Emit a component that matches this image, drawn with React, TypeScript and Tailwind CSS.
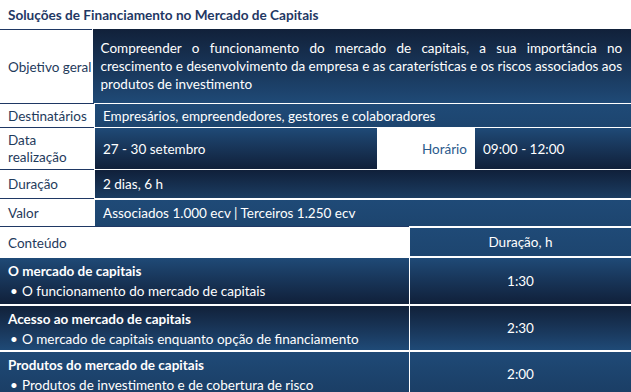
import React from "react";

const font = { fontFamily: "Lato, 'Open Sans', sans-serif" };

const modules = [
  {
    title: "O mercado de capitais",
    item: "O funcionamento do mercado de capitais",
    hours: "1:30",
    bg: "bg-linear-to-b from-[#1f4a77] to-[#10203a]",
    h: "h-[48px]",
  },
  {
    title: "Acesso ao mercado de capitais",
    item: "O mercado de capitais enquanto opção de financiamento",
    hours: "2:30",
    bg: "bg-linear-to-b from-[#11213a] to-[#1f4a77]",
    h: "h-[46px]",
  },
  {
    title: "Produtos do mercado de capitais",
    item: "Produtos de investimento e de cobertura de risco",
    hours: "2:00",
    bg: "bg-linear-to-b from-[#1f4a77] to-[#1a3d64]",
    h: "h-[46px]",
  },
];

export default function App() {
  return (
    <div
      className="w-[631px] h-[392px] overflow-hidden bg-white text-[13.5px] leading-[18px]"
      style={font}
    >
      {/* Title */}
      <div className="h-[29px] flex items-center px-2 text-[13.6px] font-bold text-[#1f3864]">
        Soluções de Financiamento no Mercado de Capitais
      </div>

      {/* Info table */}
      <div className="flex h-[74px]">
        <div className="w-[94px] mr-px border-t border-[#1f3864] flex items-center pl-2 whitespace-nowrap text-[#1f3b5c]">
          Objetivo geral
        </div>
        <div className="flex-1 bg-linear-to-b from-[#11213a] to-[#1f4a77] text-white pl-2 pr-[9px] pt-[10px]">
          <div className="text-justify [text-align-last:justify]">
            Compreender o funcionamento do mercado de capitais, a sua importância no
          </div>
          <div className="text-justify [text-align-last:justify] whitespace-nowrap">
            crescimento e desenvolvimento da empresa e as caraterísticas e os riscos associados aos
          </div>
          <div>produtos de investimento</div>
        </div>
      </div>

      <div className="flex h-[24px]">
        <div className="w-[94px] mr-px border-t border-[#1f3864] flex items-center pl-2 whitespace-nowrap text-[#1f3b5c]">
          Destinatários
        </div>
        <div className="flex-1 border-t border-white bg-linear-to-b from-[#1f4a77] to-[#1d456f] text-white px-2 flex items-center">
          Empresários, empreendedores, gestores e colaboradores
        </div>
      </div>

      <div className="flex h-[42px]">
        <div className="w-[94px] mr-px border-t border-[#1f3864] flex items-center pl-2 text-[#1f3b5c] leading-[17px]">
          Data realização
        </div>
        <div className="w-[282px] border-t border-white bg-linear-to-b from-[#1f4a77] to-[#10203a] text-white px-2 flex items-center">
          27 - 30 setembro
        </div>
        <div className="w-[98px] border-t border-white flex items-center justify-end px-2 text-[#2b5a8c]">
          Horário
        </div>
        <div className="flex-1 border-t border-white bg-linear-to-b from-[#1f4a77] to-[#10203a] text-white px-2 flex items-center">
          09:00 - 12:00
        </div>
      </div>

      <div className="flex h-[29px]">
        <div className="w-[94px] mr-px border-t border-[#1f3864] flex items-center pl-2 text-[#1f3b5c]">
          Duração
        </div>
        <div className="flex-1 border-t border-white bg-linear-to-b from-[#10203a] to-[#1b3d62] text-white px-2 flex items-center">
          2 dias, 6 h
        </div>
      </div>

      <div className="flex h-[28px]">
        <div className="w-[94px] mr-px border-t border-[#1f3864] flex items-center pl-2 text-[#1f3b5c]">
          Valor
        </div>
        <div className="flex-1 border-t-2 border-white bg-linear-to-b from-[#1f4a77] to-[#1d456f] text-white px-2 flex items-center">
          Associados 1.000 ecv | Terceiros 1.250 ecv
        </div>
      </div>

      {/* Program table */}
      <div className="flex h-[30px]">
        <div className="w-[409px] border-t border-[#1f3864] flex items-center px-2 text-[#1f3b5c]">
          <span className="mt-[2px]">Conteúdo</span>
        </div>
        <div className="flex-1 ml-px border-t-2 border-white bg-linear-to-b from-[#1f4a77] to-[#1d456f] text-white flex items-center justify-center">
          Duração, h
        </div>
      </div>

      {modules.map((m) => (
        <div key={m.title} className={`flex ${m.h}`}>
          <div className={`w-[409px] border-t-2 border-white ${m.bg} text-white px-2 pt-[3px]`}>
            <div className="font-bold leading-[20px]">{m.title}</div>
            <div className="leading-[20px] flex">
              <span className="w-[14px] pl-[2px]">•</span>
              <span>{m.item}</span>
            </div>
          </div>
          <div
            className={`flex-1 ml-px border-t-2 border-white ${m.bg} text-white flex items-center justify-center`}
          >
            {m.hours}
          </div>
        </div>
      ))}
    </div>
  );
}
